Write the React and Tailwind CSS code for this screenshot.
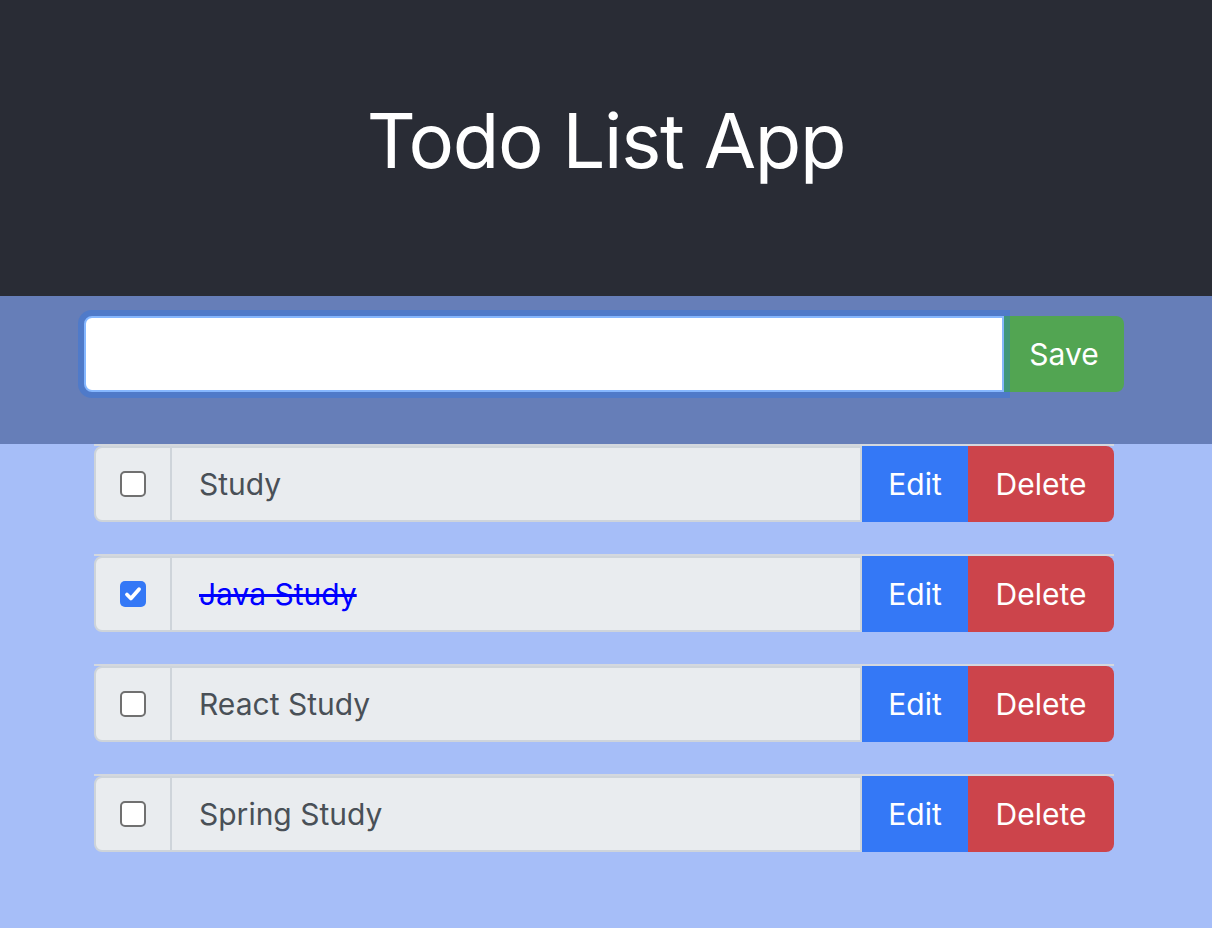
import { useState } from "react";

const initialTodos = [
  { id: 1, text: "Study", done: false },
  { id: 2, text: "Java Study", done: true },
  { id: 3, text: "React Study", done: false },
  { id: 4, text: "Spring Study", done: false },
];

function Checkbox({ checked, onChange }) {
  return (
    <button
      type="button"
      onClick={onChange}
      className={`flex h-[26px] w-[26px] items-center justify-center rounded-[5px] ${
        checked ? "bg-[#3478f6]" : "border-2 border-[#707070] bg-white"
      }`}
    >
      {checked && (
        <svg viewBox="0 0 20 20" className="h-[22px] w-[22px]" fill="none" stroke="white" strokeWidth="3.4" strokeLinecap="round" strokeLinejoin="round">
          <path d="M4.5 10.5l3.6 3.6 7.4-8.4" />
        </svg>
      )}
    </button>
  );
}

export default function App() {
  const [todos, setTodos] = useState(initialTodos);
  const [value, setValue] = useState("");

  const toggle = (id) =>
    setTodos(todos.map((t) => (t.id === id ? { ...t, done: !t.done } : t)));

  return (
    <div className="min-h-screen bg-[#a6bef8] font-['Inter','Liberation_Sans',sans-serif]">
      <header className="flex h-[296px] items-center justify-center bg-[#292c35] pb-[16px]">
        <h1 className="text-[76px] leading-none font-normal tracking-[-1.3px] text-white">
          Todo List App
        </h1>
      </header>

      {/* input bar */}
      <div className="bg-[#667eb8] pt-[20px] pb-[52px]">
        <div className="ml-[84px] flex h-[76px] w-[1040px]">
          <input
            value={value}
            onChange={(e) => setValue(e.target.value)}
            autoFocus
            className="relative z-10 h-full flex-1 rounded-l-[8px] border-2 border-[#86b7fe] bg-white px-6 text-[30px] text-[#495057] outline-none ring-[6px] ring-[#0d6efd]/25"
          />
          <button
            type="button"
            className="h-full w-[120px] rounded-r-[8px] bg-[#52a552] text-[30px] text-white"
          >
            Save
          </button>
        </div>
      </div>

      <ul className="ml-[94px] w-[1020px] pb-[44px]">
        {todos.map((t) => (
          <li key={t.id} className="mb-[32px] border-t-2 border-[#d4d8de]">
            <div className="flex h-[76px]">
              <div className="flex w-[78px] items-center justify-center rounded-l-[8px] border-2 border-[#ced4da] bg-[#e9ecef]">
                <Checkbox checked={t.done} onChange={() => toggle(t.id)} />
              </div>
              <div className="flex flex-1 items-center border-y-2 border-r-2 border-[#ced4da] bg-[#e9ecef] pl-[27px] text-[30px]">
                <span className={t.done ? "text-[#0000ff] line-through" : "text-[#495057]"}>
                  {t.text}
                </span>
              </div>
              <button type="button" className="w-[106px] bg-[#3478f6] text-[30px] text-white">
                Edit
              </button>
              <button
                type="button"
                className="w-[146px] rounded-r-[8px] bg-[#cc444b] text-[30px] text-white"
              >
                Delete
              </button>
            </div>
          </li>
        ))}
      </ul>
    </div>
  );
}
